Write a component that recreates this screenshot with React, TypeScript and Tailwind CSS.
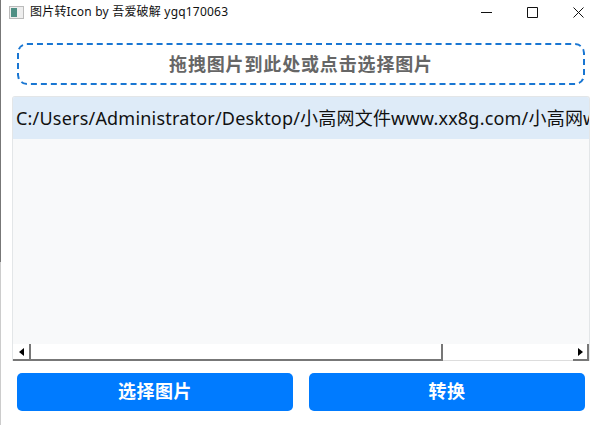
const cjkBold = "font-['Noto_Sans_CJK_SC',sans-serif] font-bold";

function ArrowLeft() {
  return <span className="h-0 w-0 border-y-[4px] border-r-[5px] border-y-transparent border-r-black" />;
}

function ArrowRight() {
  return <span className="h-0 w-0 border-y-[4px] border-l-[5px] border-y-transparent border-l-black" />;
}

function WindowControls() {
  return (
    <div className="ml-auto flex items-center gap-[35px] pr-[16px]">
      <svg width="11" height="11" viewBox="0 0 11 11" stroke="#111" fill="none">
        <path d="M0 5.5h11" />
      </svg>
      <svg width="11" height="11" viewBox="0 0 11 11" stroke="#111" fill="none">
        <path d="M.5.5h10v10H.5z" />
      </svg>
      <svg width="11" height="11" viewBox="0 0 11 11" stroke="#111" fill="none">
        <path d="M.5.5l10 10M10.5.5l-10 10" />
      </svg>
    </div>
  );
}

export default function App() {
  return (
    <div className="flex h-[425px] w-[600px] overflow-hidden bg-white font-['Noto_Sans','Noto_Sans_CJK_SC',sans-serif]">
      <div className="flex w-[1px] shrink-0 flex-col">
        <div className="h-[262px] bg-[#777]" />
        <div className="flex-1 bg-[#ccc]" />
      </div>
      <div className="flex min-w-0 flex-1 flex-col">
        <div className="flex h-[24px] shrink-0 items-center pl-[8px]">
          <div className="flex h-[13px] w-[15px] border border-[#bbb] bg-[#eee]">
            <div className="m-[1px] w-[6px] bg-[#4f8f84]" />
          </div>
          <span className="ml-[6px] text-[12px] leading-none tracking-[0.2px] text-[#111]">图片转Icon by 吾爱破解 ygq170063</span>
          <WindowControls />
        </div>
        <div className="flex min-h-0 flex-1 flex-col pl-[11px] pr-[10px] pt-[19px]">
          <div className="mx-[5px] flex h-[42px] shrink-0 items-center justify-center rounded-[10px] border-2 border-dashed border-[#1976d2] pb-[2px]">
            <span className={`${cjkBold} text-[18px] tracking-[0.85px] text-[#666]`}>拖拽图片到此处或点击选择图片</span>
          </div>
          <div className="mt-[11px] flex h-[265px] w-[578px] shrink-0 flex-col overflow-hidden rounded-t-[3px] border border-b-0 border-[#e3e6e8] bg-[#f8f9fa]">
            <div className="flex h-[42px] shrink-0 items-center overflow-hidden whitespace-nowrap bg-[#deebf8] pl-[3px] text-[18px] tracking-[0.2px] text-[#111]">
              C:/Users/Administrator/Desktop/小高网文件www.xx8g.com/小高网www
            </div>
            <div className="flex-1" />
            <div className="flex h-[17px] shrink-0 items-center bg-white">
              <div className="flex h-full w-[18px] items-center justify-center border-b-2 border-r-2 border-b-[#777] border-r-[#777]">
                <ArrowLeft />
              </div>
              <div className="h-full w-[412px] border-b-2 border-r-2 border-b-[#777] border-r-[#777]" />
              <div className="h-full flex-1 border-b border-b-[#ddd]" />
              <div className="flex h-full w-[16px] items-center justify-center border-b-2 border-r-2 border-b-[#777] border-r-[#777]">
                <ArrowRight />
              </div>
            </div>
          </div>
          <div className="mt-[12px] flex gap-[16px] px-[5px]">
            <button className={`${cjkBold} h-[38px] w-[276px] rounded-[5px] bg-[#007bff] pb-[3px] text-[18px] tracking-[0.5px] text-white`}>选择图片</button>
            <button className={`${cjkBold} h-[38px] w-[276px] rounded-[5px] bg-[#007bff] pb-[3px] text-[18px] tracking-[0.5px] text-white`}>转换</button>
          </div>
        </div>
      </div>
    </div>
  );
}
